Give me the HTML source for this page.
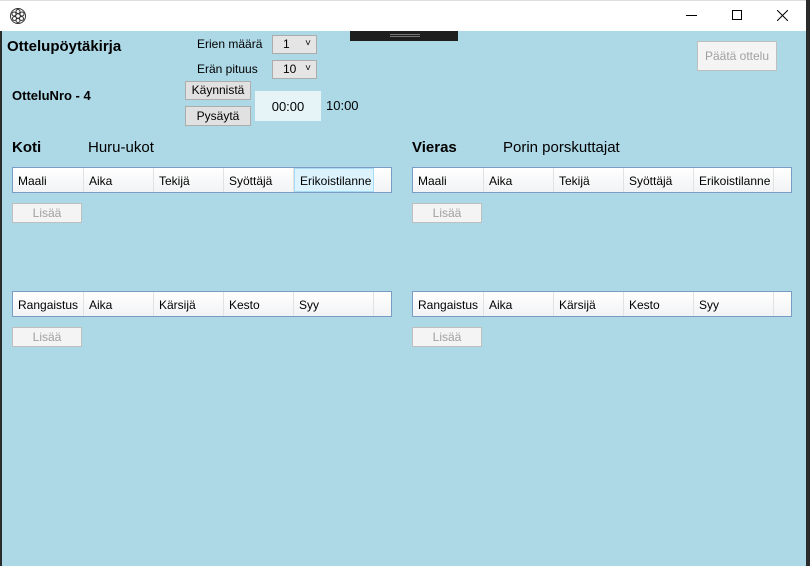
<!DOCTYPE html>
<html><head><style>
*{margin:0;padding:0;box-sizing:border-box}
body{width:810px;height:566px;background:#2b2b2b;font-family:"Segoe UI","Liberation Sans",sans-serif;position:relative;overflow:hidden;font-size:12px;color:#000}
.tb{position:absolute;left:0;top:0;width:806px;height:31px;background:#fff;border-top:1px solid #ddd}
.main{position:absolute;left:2px;top:31px;width:804px;height:535px;background:#add8e6}
.a{position:absolute;white-space:nowrap}
.btn{position:absolute;background:#e1e1e1;border:1px solid #adadad;text-align:center;font-size:12px;line-height:17px}
.dis{position:absolute;background:#f4f4f4;border:1px solid #bfbfbf;color:#a0a0a0;text-align:center;font-size:12px;line-height:18px}
.cb{position:absolute;background:#e5e5e5;border:1px solid #acacac;font-size:12px;line-height:17px;padding-left:10px}
.cb:after{content:"˅";position:absolute;right:5px;top:-1px;font-size:10px}
.tbl{position:absolute;height:26px;border:1px solid #7a9cc2;background:#fff;display:flex}
.tbl div{height:24px;line-height:26px;padding-left:5px;border-right:1px solid #e2e2e2;background:linear-gradient(#fff,#f2f3f5);font-size:12px}
</style></head><body>
<div class="tb">
<svg style="position:absolute;left:9px;top:6px" width="18" height="18" viewBox="0 0 18 18" fill="none" stroke="#333" stroke-width="1"><circle cx="9" cy="9" r="7.5"/><circle cx="9" cy="9" r="2.3"/><circle cx="9" cy="4.5" r="2"/><circle cx="9" cy="13.5" r="2"/><circle cx="5" cy="7" r="2"/><circle cx="13" cy="7" r="2"/><circle cx="5.5" cy="11.5" r="2"/><circle cx="12.5" cy="11.5" r="2"/></svg>
<div class="a" style="left:686px;top:14px;width:11px;height:1px;background:#000"></div>
<div class="a" style="left:732px;top:9px;width:10px;height:10px;border:1px solid #000"></div>
<svg style="position:absolute;left:777px;top:9px" width="11" height="11"><path d="M0 0L11 11M11 0L0 11" stroke="#000" stroke-width="1"/></svg>
</div>
<div class="main">
<div class="a" style="left:348px;top:0;width:108px;height:10px;background:#1e1e1e"></div>
<div class="a" style="left:388px;top:3px;width:30px;height:1px;background:#777"></div>
<div class="a" style="left:388px;top:5px;width:30px;height:1px;background:#777"></div>
<div class="a" style="left:5px;top:7px;font-size:15px;font-weight:bold">Ottelupöytäkirja</div>
<div class="a" style="left:10px;top:57px;font-size:13px;font-weight:bold">OtteluNro - 4</div>
<div class="a" style="left:195px;top:6px">Erien määrä</div>
<div class="a" style="left:195px;top:31px">Erän pituus</div>
<div class="cb" style="left:270px;top:4px;width:45px;height:19px">1</div>
<div class="cb" style="left:270px;top:29px;width:45px;height:19px">10</div>
<div class="btn" style="left:183px;top:50px;width:66px;height:19px">Käynnistä</div>
<div class="btn" style="left:183px;top:75px;width:66px;height:20px;line-height:19px">Pysäytä</div>
<div class="a" style="left:253px;top:60px;width:66px;height:30px;background:#e6f4f8;text-align:center;line-height:32px;font-size:13px">00:00</div>
<div class="a" style="left:324px;top:67px;font-size:13px">10:00</div>
<div class="dis" style="left:695px;top:10px;width:80px;height:30px;line-height:29px">Päätä ottelu</div>

<div class="a" style="left:10px;top:108px;font-size:15px;font-weight:bold">Koti</div>
<div class="a" style="left:86px;top:108px;font-size:15px">Huru-ukot</div>
<div class="tbl" style="left:10px;top:136px;width:380px"><div style="width:71px">Maali</div><div style="width:70px">Aika</div><div style="width:70px">Tekijä</div><div style="width:70px">Syöttäjä</div><div style="width:80px;background:#dcf2fc;border:1px solid #a6dcf5;line-height:24px">Erikoistilanne</div><div style="flex:1;border:none"></div></div>
<div class="dis" style="left:10px;top:172px;width:70px;height:20px">Lisää</div>
<div class="tbl" style="left:10px;top:260px;width:380px"><div style="width:71px">Rangaistus</div><div style="width:70px">Aika</div><div style="width:70px">Kärsijä</div><div style="width:70px">Kesto</div><div style="width:80px">Syy</div><div style="flex:1;border:none"></div></div>
<div class="dis" style="left:10px;top:296px;width:70px;height:20px">Lisää</div>

<div class="a" style="left:410px;top:108px;font-size:15px;font-weight:bold">Vieras</div>
<div class="a" style="left:501px;top:108px;font-size:15px">Porin porskuttajat</div>
<div class="tbl" style="left:410px;top:136px;width:380px"><div style="width:71px">Maali</div><div style="width:70px">Aika</div><div style="width:70px">Tekijä</div><div style="width:70px">Syöttäjä</div><div style="width:80px">Erikoistilanne</div><div style="flex:1;border:none"></div></div>
<div class="dis" style="left:410px;top:172px;width:70px;height:20px">Lisää</div>
<div class="tbl" style="left:410px;top:260px;width:380px"><div style="width:71px">Rangaistus</div><div style="width:70px">Aika</div><div style="width:70px">Kärsijä</div><div style="width:70px">Kesto</div><div style="width:80px">Syy</div><div style="flex:1;border:none"></div></div>
<div class="dis" style="left:410px;top:296px;width:70px;height:20px">Lisää</div>
</div>
</body></html>
